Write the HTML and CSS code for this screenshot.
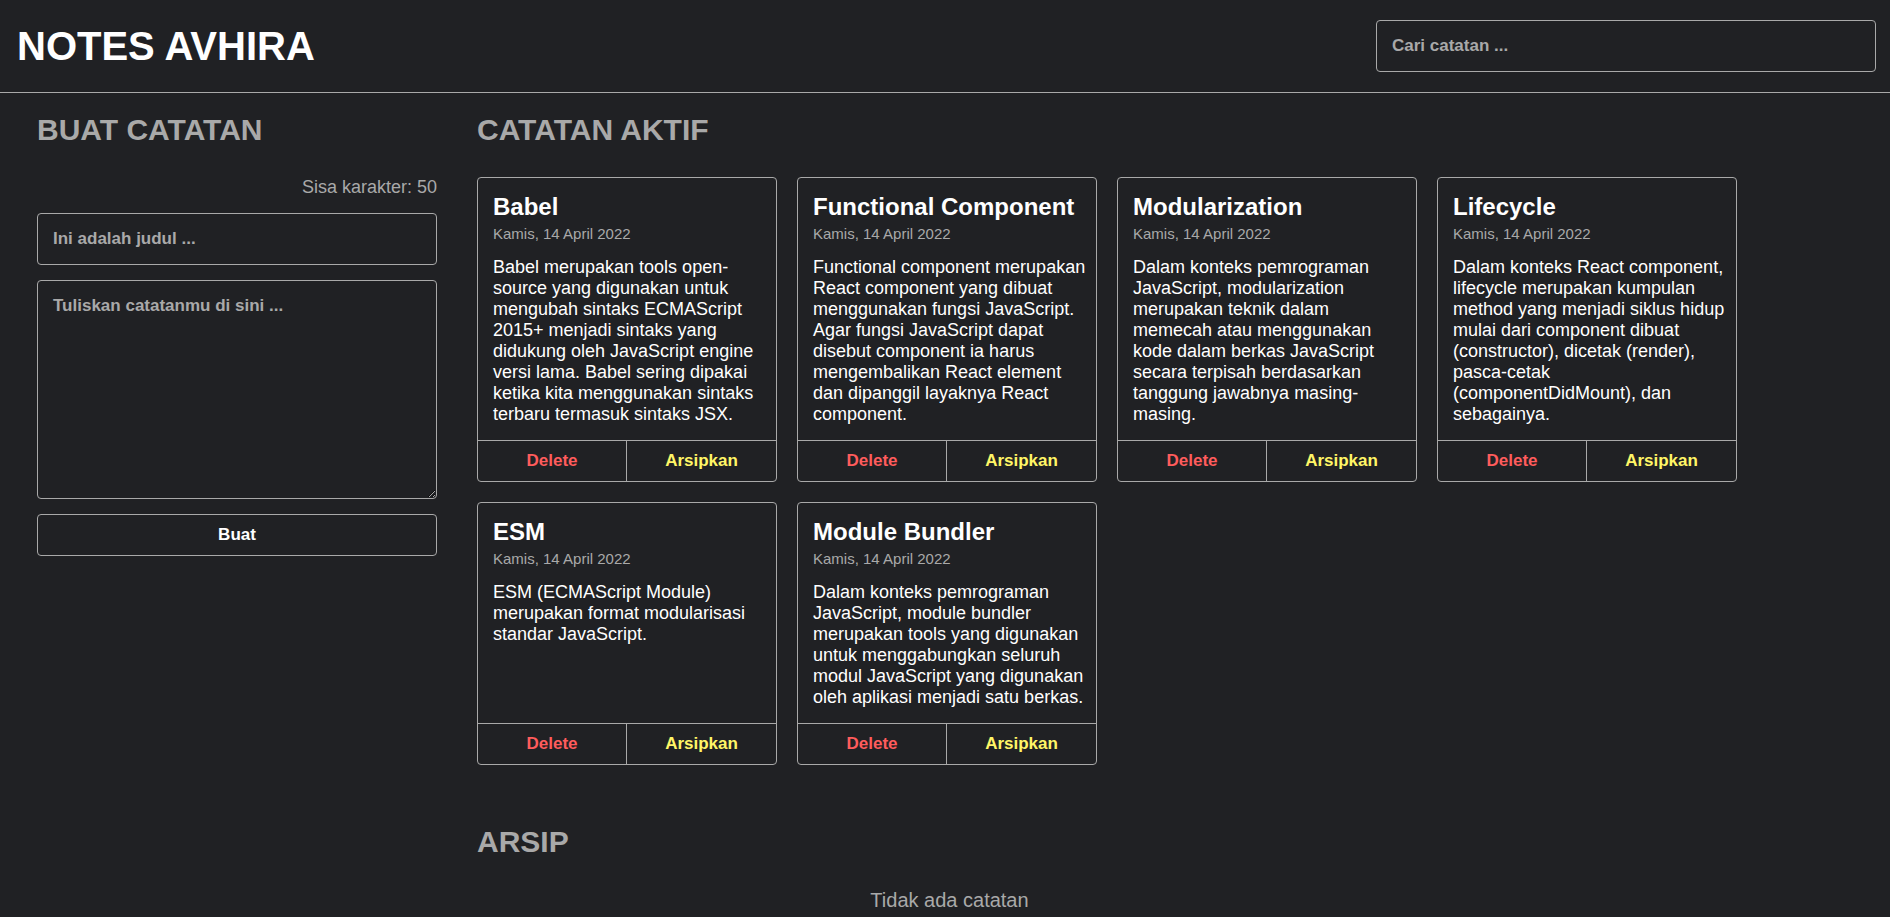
FILE: index.html
```html
<!DOCTYPE html>
<html lang="id">
<head>
<meta charset="utf-8">
<meta name="viewport" content="width=device-width, initial-scale=1">
<title>Notes Avhira</title>
<link rel="stylesheet" href="styles.css">
</head>
<body>
<header class="header">
  <h1 class="header-title">NOTES AVHIRA</h1>
  <input class="field search" type="text" placeholder="Cari catatan ..." aria-label="Cari catatan">
</header>
<main class="main">
  <section class="create">
    <h2 class="section-title">BUAT CATATAN</h2>
    <form class="form">
      <p class="counter">Sisa karakter: 50</p>
      <input class="field" type="text" placeholder="Ini adalah judul ..." aria-label="Judul catatan">
      <textarea class="field field-body" placeholder="Tuliskan catatanmu di sini ..." aria-label="Isi catatan"></textarea>
      <button class="submit" type="button">Buat</button>
    </form>
  </section>
  <div class="lists">
    <section>
      <h2 class="section-title">CATATAN AKTIF</h2>
      <div class="notes">
        <article class="note">
          <div class="note-content">
            <h3 class="note-title">Babel</h3>
            <p class="note-date">Kamis, 14 April 2022</p>
            <p class="note-body">Babel merupakan tools open-source yang digunakan untuk mengubah sintaks ECMAScript 2015+ menjadi sintaks yang didukung oleh JavaScript engine versi lama. Babel sering dipakai ketika kita menggunakan sintaks terbaru termasuk sintaks JSX.</p>
          </div>
          <div class="note-actions"><button class="action action-delete" type="button">Delete</button><button class="action action-archive" type="button">Arsipkan</button></div>
        </article>
        <article class="note">
          <div class="note-content">
            <h3 class="note-title">Functional Component</h3>
            <p class="note-date">Kamis, 14 April 2022</p>
            <p class="note-body">Functional component merupakan React component yang dibuat menggunakan fungsi JavaScript. Agar fungsi JavaScript dapat disebut component ia harus mengembalikan React element dan dipanggil layaknya React component.</p>
          </div>
          <div class="note-actions"><button class="action action-delete" type="button">Delete</button><button class="action action-archive" type="button">Arsipkan</button></div>
        </article>
        <article class="note">
          <div class="note-content">
            <h3 class="note-title">Modularization</h3>
            <p class="note-date">Kamis, 14 April 2022</p>
            <p class="note-body">Dalam konteks pemrograman JavaScript, modularization merupakan teknik dalam memecah atau menggunakan kode dalam berkas JavaScript secara terpisah berdasarkan tanggung jawabnya masing-masing.</p>
          </div>
          <div class="note-actions"><button class="action action-delete" type="button">Delete</button><button class="action action-archive" type="button">Arsipkan</button></div>
        </article>
        <article class="note">
          <div class="note-content">
            <h3 class="note-title">Lifecycle</h3>
            <p class="note-date">Kamis, 14 April 2022</p>
            <p class="note-body">Dalam konteks React component, lifecycle merupakan kumpulan method yang menjadi siklus hidup mulai dari component dibuat (constructor), dicetak (render), pasca-cetak (componentDidMount), dan sebagainya.</p>
          </div>
          <div class="note-actions"><button class="action action-delete" type="button">Delete</button><button class="action action-archive" type="button">Arsipkan</button></div>
        </article>
        <article class="note">
          <div class="note-content">
            <h3 class="note-title">ESM</h3>
            <p class="note-date">Kamis, 14 April 2022</p>
            <p class="note-body">ESM (ECMAScript Module) merupakan format modularisasi standar JavaScript.</p>
          </div>
          <div class="note-actions"><button class="action action-delete" type="button">Delete</button><button class="action action-archive" type="button">Arsipkan</button></div>
        </article>
        <article class="note">
          <div class="note-content">
            <h3 class="note-title">Module Bundler</h3>
            <p class="note-date">Kamis, 14 April 2022</p>
            <p class="note-body">Dalam konteks pemrograman JavaScript, module bundler merupakan tools yang digunakan untuk menggabungkan seluruh modul JavaScript yang digunakan oleh aplikasi menjadi satu berkas.</p>
          </div>
          <div class="note-actions"><button class="action action-delete" type="button">Delete</button><button class="action action-archive" type="button">Arsipkan</button></div>
        </article>
      </div>
    </section>
    <section>
      <h2 class="section-title">ARSIP</h2>
      <p class="empty">Tidak ada catatan</p>
    </section>
  </div>
</main>
</body>
</html>
```

FILE: styles.css
```css
:root {
  --bg: #202124;
  --line: #a9a9a9;
  --muted: #a9a9a9;
  --text: #ffffff;
  color-scheme: dark;
}

* {
  box-sizing: border-box;
  margin: 0;
  padding: 0;
}

body {
  background: var(--bg);
  color: var(--text);
  font-family: "Liberation Sans", Arial, sans-serif;
  font-size: 18px;
  line-height: 21px;
}

.header {
  display: flex;
  flex-wrap: wrap;
  align-items: center;
  justify-content: space-between;
  gap: 20px;
  padding: 20px 14px 20px 17px;
  border-bottom: 1px solid var(--line);
}

.header-title {
  font-size: 40px;
  line-height: 46px;
}

.field {
  width: 100%;
  padding: 15px;
  border: 1px solid var(--line);
  border-radius: 4px;
  background: transparent;
  color: var(--text);
  font-family: inherit;
  font-size: 17px;
  font-weight: bold;
  line-height: 20px;
}

.field::placeholder {
  color: var(--muted);
}

.search {
  max-width: 500px;
}

.main {
  display: flex;
  flex-wrap: wrap;
  gap: 40px;
  padding: 20px 37px 0;
}

.section-title {
  margin-bottom: 30px;
  color: var(--muted);
  font-size: 30px;
  line-height: 34px;
}

.create {
  flex: 0 1 400px;
}

.form {
  display: flex;
  flex-direction: column;
  gap: 15px;
}

.counter {
  color: var(--muted);
  text-align: right;
}

.field-body {
  height: 219px;
  resize: vertical;
}

.submit {
  padding: 10px;
  border: 1px solid var(--line);
  border-radius: 4px;
  background: transparent;
  color: var(--text);
  font-family: inherit;
  font-size: 17px;
  font-weight: bold;
  line-height: 20px;
}

.lists {
  display: flex;
  flex: 1 1 300px;
  flex-direction: column;
  gap: 60px;
  max-width: 1260px;
}

.notes {
  display: grid;
  grid-template-columns: repeat(auto-fill, 300px);
  gap: 20px;
}

.note {
  display: flex;
  flex-direction: column;
  border: 1px solid var(--line);
  border-radius: 4px;
}

.note-content {
  flex: 1;
  padding: 15px 10px 15px 15px;
}

.note-title {
  font-size: 24px;
  line-height: 27px;
}

.note-date {
  margin: 5px 0 15px;
  color: var(--muted);
  font-size: 15px;
  line-height: 17px;
}

.note-actions {
  display: grid;
  grid-template-columns: 1fr 1fr;
  border-top: 1px solid var(--line);
}

.action {
  padding: 10px;
  border: 0;
  background: transparent;
  font-family: inherit;
  font-size: 17px;
  font-weight: bold;
  line-height: 20px;
}

.action-delete {
  border-right: 1px solid var(--line);
  color: #ff5c5c;
}

.action-archive {
  color: #fff566;
}

.empty {
  width: 75%;
  color: var(--muted);
  font-size: 20px;
  line-height: 23px;
  text-align: center;
}
```
